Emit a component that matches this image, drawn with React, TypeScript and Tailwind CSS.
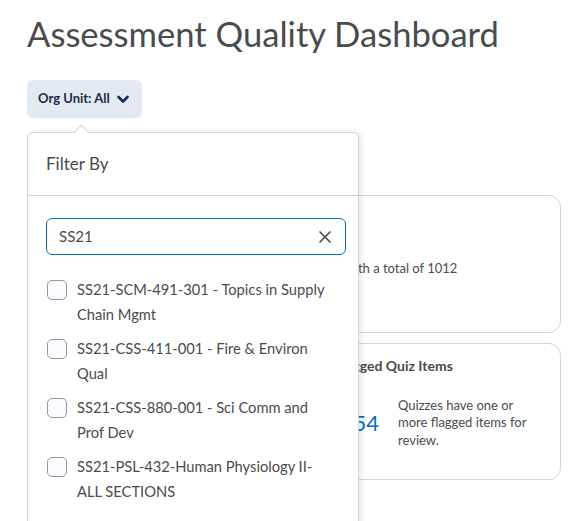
import { X } from "lucide-react";

const courses = [
  "SS21-SCM-491-301 - Topics in Supply Chain Mgmt",
  "SS21-CSS-411-001 - Fire & Environ Qual",
  "SS21-CSS-880-001 - Sci Comm and Prof Dev",
  "SS21-PSL-432-Human Physiology II- ALL SECTIONS",
];

function FilterPopup() {
  return (
    <div className="absolute left-[27px] top-[132px] w-[332px] h-[420px] bg-white border border-[#cdd5dc] rounded-t-[6px] shadow-[3px_0_4px_rgba(0,0,0,0.08)]">
      {/* pointer */}
      <div className="absolute -top-[6px] left-[48px] w-[11px] h-[11px] rotate-45 bg-white border-l border-t border-[#cdd5dc]" />
      <div className="h-[62px] flex items-center pl-[18px] text-[17px] text-[#494c4e]">
        Filter By
      </div>
      <div className="border-t border-[#cdd5dc]" />
      <div className="pt-[22px] pl-[18px]">
        <div className="w-[300px] h-[37px] border-[1.5px] border-[#006fbf] rounded-[6px] flex items-center justify-between pl-[12px] pr-[10px]">
          <span className="text-[15px] text-[#494c4e]">SS21</span>
          <X size={20} strokeWidth={2} className="text-[#494c4e]" />
        </div>
      </div>
      <div className="pt-[22px] pl-[19px] flex flex-col gap-[9px]">
        {courses.map((c) => (
          <div key={c} className="flex items-start gap-[10px]">
            <div className="mt-[2.5px] w-[20px] h-[20px] shrink-0 rounded-[5px] border border-[#90989d] bg-[#f9fbff]" />
            <div className="w-[255px] text-[14.7px] leading-[25px] text-[#494c4e]">{c}</div>
          </div>
        ))}
      </div>
    </div>
  );
}

export default function App() {
  return (
    <div
      className="relative h-[521px] overflow-hidden bg-white pl-[27px] pr-[7px]"
      style={{ fontFamily: "Lato, 'Noto Sans', sans-serif" }}
    >
      <h1 className="pt-[13px] text-[34.6px] leading-[1.2] text-[#494c4e]">
        Assessment Quality Dashboard
      </h1>

      <button className="mt-[25px] h-[38px] pl-[11px] pr-[12px] rounded-[6px] bg-[#e3e9f1] flex items-center gap-[6px] text-[13px] font-bold text-[#1c2c4a]">
        Org Unit: All
        <svg width="14" height="14" viewBox="0 0 14 14" className="text-[#0f2d55]">
          <path d="M2.5 5 L7 9.5 L11.5 5" fill="none" stroke="currentColor" strokeWidth="2.6" strokeLinecap="round" strokeLinejoin="round" />
        </svg>
      </button>

      {/* Cards */}
      <div className="mt-[77px] ml-[286px] flex flex-col gap-[10px]">
        <div className="h-[138px] rounded-[12px] border border-[#cdd5dc] px-[20px] pt-[63px]">
          <p className="text-[13px] text-[#494c4e]">7 with a total of 1012</p>
        </div>
        <div className="h-[137px] rounded-[12px] border border-[#cdd5dc] px-[20px] pt-[11px]">
          <div className="text-[14px] font-bold text-[#494c4e]">Flagged Quiz Items</div>
          <div className="mt-[21px] flex items-center gap-[19px]">
            <span className="w-[45px] text-right text-[22px] text-[#006fbf]">354</span>
            <p className="w-[140px] text-[13px] leading-[17.5px] text-[#494c4e]">
              Quizzes have one or more flagged items for review.
            </p>
          </div>
        </div>
      </div>

      <FilterPopup />
    </div>
  );
}
